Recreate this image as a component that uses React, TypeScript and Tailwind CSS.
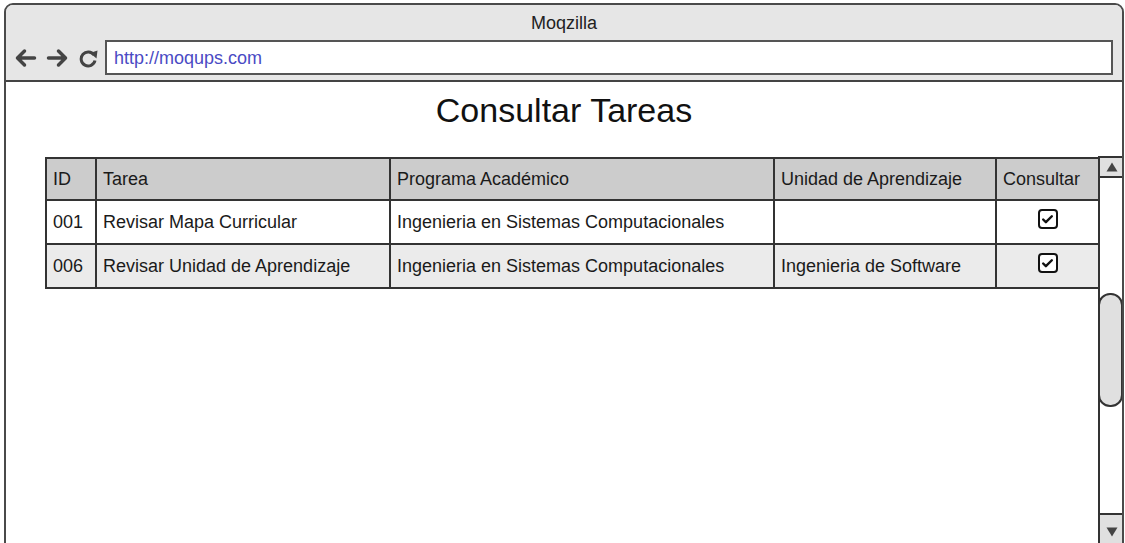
import { Check } from "lucide-react";

type Row = {
  id: string;
  tarea: string;
  programa: string;
  unidad: string;
  alt?: boolean;
};

const rows: Row[] = [
  {
    id: "001",
    tarea: "Revisar Mapa Curricular",
    programa: "Ingenieria en Sistemas Computacionales",
    unidad: "",
  },
  {
    id: "006",
    tarea: "Revisar Unidad de Aprendizaje",
    programa: "Ingenieria en Sistemas Computacionales",
    unidad: "Ingenieria de Software",
    alt: true,
  },
];

const cols = "grid grid-cols-[48px_294px_384px_222px_103px]";

function Arrow({ flip }: { flip?: boolean }) {
  return (
    <svg
      width="22"
      height="20"
      viewBox="0 0 22 20"
      className={flip ? "-scale-x-100" : ""}
    >
      <path
        d="M2.5 10 H19.5 M9.5 3 L2.5 10 L9.5 17"
        fill="none"
        stroke="#444"
        strokeWidth="3.5"
        strokeLinecap="round"
        strokeLinejoin="round"
      />
    </svg>
  );
}

function Reload() {
  return (
    <svg width="22" height="20" viewBox="0 0 22 20">
      <path
        d="M17 7 A7 7 0 1 0 18 12.5"
        fill="none"
        stroke="#444"
        strokeWidth="3"
      />
      <path d="M13 5 L20.5 2.5 L19.5 10.5 Z" fill="#444" />
    </svg>
  );
}

function Checkbox() {
  return (
    <div className="w-[20px] h-[20px] border-[2.5px] border-[#111] rounded-[4px] flex items-center justify-center bg-white">
      <Check className="w-[13px] h-[13px] text-[#111]" strokeWidth={4.5} />
    </div>
  );
}

function Triangle({ down }: { down?: boolean }) {
  return (
    <svg width="12" height="10" viewBox="0 0 12 10">
      <path d={down ? "M0.5 0.5 H11.5 L6 9.5 Z" : "M0.5 9.5 H11.5 L6 0.5 Z"} fill="#444" />
    </svg>
  );
}

export default function App() {
  return (
    <div className="w-[1125px] h-[543px] overflow-hidden bg-white pl-[4px] pt-[3px] font-['Liberation_Sans',Arial,sans-serif] text-[#1a1a1a]">
      <div className="w-[1120px] h-[560px] border-2 border-[#4a4a4a] rounded-t-[9px] flex flex-col overflow-hidden">
        {/* title bar */}
        <div className="bg-[#e6e6e6] border-b-2 border-[#444] pb-[5px]">
          <div className="h-[35px] flex items-center justify-center text-[18px] leading-[20px] text-[#222]">
            Moqzilla
          </div>
          <div className="h-[35px] flex items-center pl-[9px] pr-[9px]">
            <Arrow />
            <div className="ml-[9px] flex">
              <Arrow flip />
            </div>
            <div className="ml-[9px] flex">
              <Reload />
            </div>
            <div className="ml-[6px] flex-1 h-[35px] border-2 border-[#555] bg-white flex items-center pl-[7px] pt-[1px] text-[18px] text-[#4a4ac4]">
              http://moqups.com
            </div>
          </div>
        </div>

        {/* content */}
        <div className="flex-1 flex flex-col">
          <h1 className="mt-[9px] text-center text-[34px] leading-[39px] text-[#111]">
            Consultar Tareas
          </h1>
          <div className="mt-[26px] flex flex-1 pl-[39px]">
            <div className="w-[1053px] pt-[1px]">
              <div className="border-l-2 border-[#333] text-[18px] leading-[22px]">
                <div className={`${cols} h-[42px] bg-[#cccccc] border-t-2 border-[#333]`}>
                  {["ID", "Tarea", "Programa Académico", "Unidad de Aprendizaje", "Consultar"].map(
                    (h, i) => (
                      <div
                        key={h}
                        className={`flex items-center pl-[6px] ${i > 0 ? "border-l-2 border-[#333]" : ""}`}
                      >
                        {h}
                      </div>
                    )
                  )}
                </div>
                {rows.map((r) => (
                  <div
                    key={r.id}
                    className={`${cols} h-[44px] border-t-2 border-[#333] ${r.alt ? "bg-[#ebebeb]" : "bg-white"}`}
                  >
                    <div className="flex items-center pl-[6px]">{r.id}</div>
                    <div className="flex items-center pl-[6px] border-l-2 border-[#333]">{r.tarea}</div>
                    <div className="flex items-center pl-[6px] border-l-2 border-[#333]">{r.programa}</div>
                    <div className="flex items-center pl-[6px] border-l-2 border-[#333]">{r.unidad}</div>
                    <div className="flex items-center justify-center pb-[6px] border-l-2 border-[#333]">
                      <Checkbox />
                    </div>
                  </div>
                ))}
                <div className="border-t-2 border-[#333]" />
              </div>
            </div>

            {/* scrollbar */}
            <div className="flex-1 flex flex-col border-l-2 border-t-2 border-[#333] bg-white">
              <div className="h-[20px] bg-[#e0e0e0] border-b-2 border-[#333] flex items-center justify-center">
                <Triangle />
              </div>
              <div className="mt-[115px] -ml-[2px] h-[114px] w-[25px] rounded-[12px] border-2 border-[#333] bg-[#e0e0e0]" />
              <div className="mt-[106px] h-[40px] bg-[#e0e0e0] border-t-2 border-[#333] flex justify-center pt-[12px]">
                <Triangle down />
              </div>
            </div>
          </div>
        </div>
      </div>
    </div>
  );
}
